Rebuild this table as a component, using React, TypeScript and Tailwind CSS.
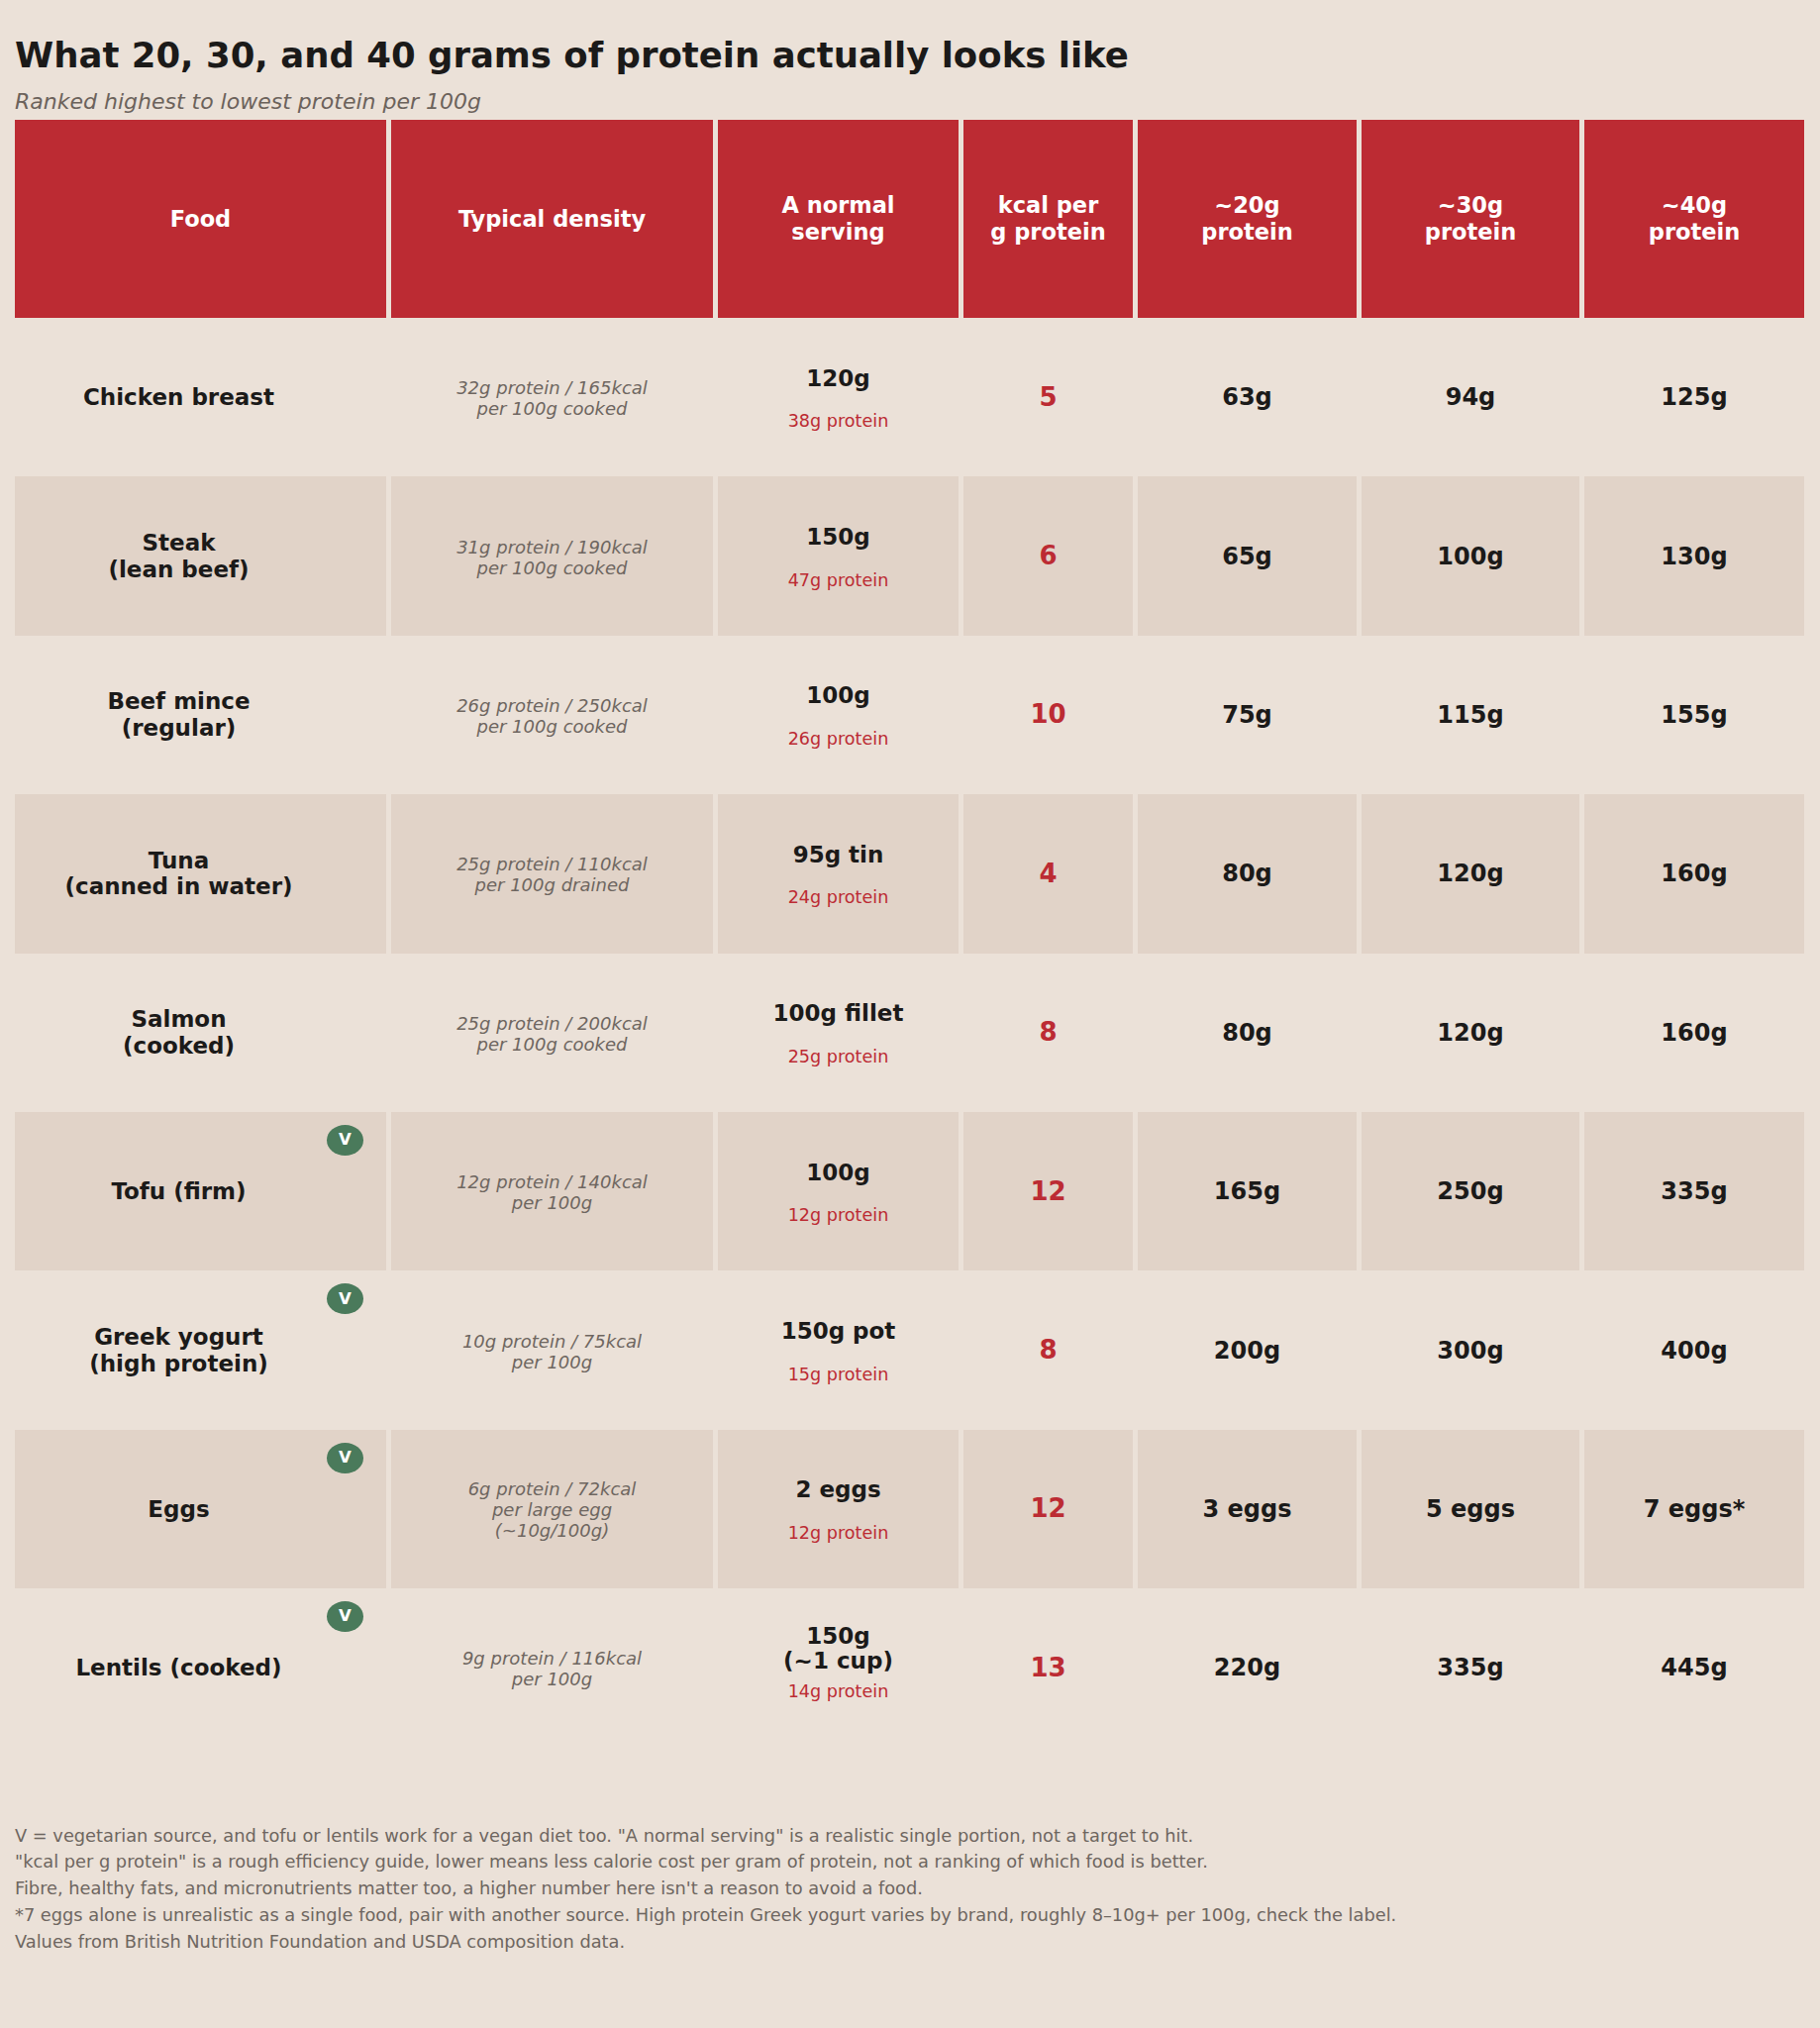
import React from 'react';

type Row = {
  food: string[];
  veg?: boolean;
  density: string[];
  serving: string[];
  servingProtein: string;
  kcal: string;
  g20: string;
  g30: string;
  g40: string;
};

const rows: Row[] = [
  { food: ['Chicken breast'], density: ['32g protein / 165kcal', 'per 100g cooked'], serving: ['120g'], servingProtein: '38g protein', kcal: '5', g20: '63g', g30: '94g', g40: '125g' },
  { food: ['Steak', '(lean beef)'], density: ['31g protein / 190kcal', 'per 100g cooked'], serving: ['150g'], servingProtein: '47g protein', kcal: '6', g20: '65g', g30: '100g', g40: '130g' },
  { food: ['Beef mince', '(regular)'], density: ['26g protein / 250kcal', 'per 100g cooked'], serving: ['100g'], servingProtein: '26g protein', kcal: '10', g20: '75g', g30: '115g', g40: '155g' },
  { food: ['Tuna', '(canned in water)'], density: ['25g protein / 110kcal', 'per 100g drained'], serving: ['95g tin'], servingProtein: '24g protein', kcal: '4', g20: '80g', g30: '120g', g40: '160g' },
  { food: ['Salmon', '(cooked)'], density: ['25g protein / 200kcal', 'per 100g cooked'], serving: ['100g fillet'], servingProtein: '25g protein', kcal: '8', g20: '80g', g30: '120g', g40: '160g' },
  { food: ['Tofu (firm)'], veg: true, density: ['12g protein / 140kcal', 'per 100g'], serving: ['100g'], servingProtein: '12g protein', kcal: '12', g20: '165g', g30: '250g', g40: '335g' },
  { food: ['Greek yogurt', '(high protein)'], veg: true, density: ['10g protein / 75kcal', 'per 100g'], serving: ['150g pot'], servingProtein: '15g protein', kcal: '8', g20: '200g', g30: '300g', g40: '400g' },
  { food: ['Eggs'], veg: true, density: ['6g protein / 72kcal', 'per large egg', '(~10g/100g)'], serving: ['2 eggs'], servingProtein: '12g protein', kcal: '12', g20: '3 eggs', g30: '5 eggs', g40: '7 eggs*' },
  { food: ['Lentils (cooked)'], veg: true, density: ['9g protein / 116kcal', 'per 100g'], serving: ['150g', '(~1 cup)'], servingProtein: '14g protein', kcal: '13', g20: '220g', g30: '335g', g40: '445g' },
];

const headers = [['Food'], ['Typical density'], ['A normal', 'serving'], ['kcal per', 'g protein'], ['~20g', 'protein'], ['~30g', 'protein'], ['~40g', 'protein']];

const Lines = ({ lines }: { lines: string[] }) => (
  <>
    {lines.map((l, i) => (
      <span key={i} className="block">{l}</span>
    ))}
  </>
);

export default function App() {
  return (
    <div className="min-h-[2048px] w-[1838px] bg-[#ebe1d8] px-[15px] pt-[34px] pb-[40px] font-['DejaVu_Sans',sans-serif]">
      <h1 className="text-[35.5px] leading-[43px] font-bold text-[#1b1a19]">What 20, 30, and 40 grams of protein actually looks like</h1>
      <p className="mt-[13px] text-[22px] leading-[26px] italic text-[#6b625b]">Ranked highest to lowest protein per 100g</p>

      <div className="mt-[5px] grid grid-cols-[375px_325px_243px_171px_221px_220px_222px] gap-x-[5px]">
        {headers.map((h, i) => (
          <div key={i} className="h-[200px] bg-[#bc2b33] flex items-center justify-center text-center text-white font-bold text-[22.5px] leading-[27px]">
            <div><Lines lines={h} /></div>
          </div>
        ))}

        {rows.map((r, idx) => {
          const shade = idx % 2 === 1 ? 'bg-[#e1d3c8]' : 'bg-transparent';
          const cell = `h-[160.4px] flex items-center justify-center text-center ${shade}`;
          return (
            <React.Fragment key={idx}>
              <div className={`${cell} relative pr-[44px] text-[23px] leading-[26.5px] font-bold text-[#1b1a19]`}>
                <div><Lines lines={r.food} /></div>
                {r.veg && (
                  <span className="absolute right-[23px] top-[13px] w-[37px] h-[31px] rounded-[50%] bg-[#4a7a5b] text-white text-[16.5px] font-bold flex items-center justify-center">V</span>
                )}
              </div>
              <div className={`${cell} pt-[2px] text-[18px] leading-[21px] italic text-[#6e6660]`}>
                <div><Lines lines={r.density} /></div>
              </div>
              <div className={`${cell} flex-col`}>
                <div className="h-[30px] flex items-center justify-center text-[23px] leading-[25px] font-bold text-[#1b1a19]">
                  <div><Lines lines={r.serving} /></div>
                </div>
                <div className="mt-[18px] text-[17.6px] leading-[20px] text-[#bc2b33]">{r.servingProtein}</div>
              </div>
              <div className={`${cell} text-[26px] font-bold text-[#bc2b33]`}>{r.kcal}</div>
              <div className={`${cell} text-[24px] font-bold text-[#1b1a19]`}>{r.g20}</div>
              <div className={`${cell} text-[24px] font-bold text-[#1b1a19]`}>{r.g30}</div>
              <div className={`${cell} text-[24px] font-bold text-[#1b1a19]`}>{r.g40}</div>
            </React.Fragment>
          );
        })}
      </div>

      <div className="mt-[76px] text-[17.8px] leading-[26.75px] text-[#6e6660]">
        <p>V = vegetarian source, and tofu or lentils work for a vegan diet too. "A normal serving" is a realistic single portion, not a target to hit.</p>
        <p>"kcal per g protein" is a rough efficiency guide, lower means less calorie cost per gram of protein, not a ranking of which food is better.</p>
        <p>Fibre, healthy fats, and micronutrients matter too, a higher number here isn't a reason to avoid a food.</p>
        <p>*7 eggs alone is unrealistic as a single food, pair with another source. High protein Greek yogurt varies by brand, roughly 8–10g+ per 100g, check the label.</p>
        <p>Values from British Nutrition Foundation and USDA composition data.</p>
      </div>
    </div>
  );
}
